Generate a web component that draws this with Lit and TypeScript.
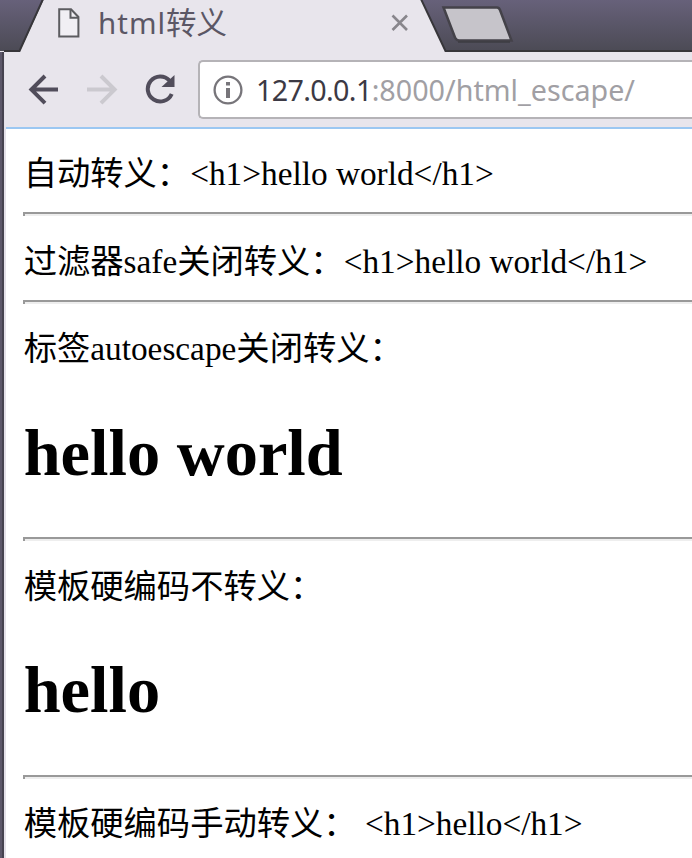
import { LitElement, html, css } from "lit";
import { customElement } from "lit/decorators.js";

@customElement("browser-tabs")
class BrowserTabs extends LitElement {
  static styles = css`
    :host {
      display: block;
      position: relative;
      height: 52px;
      overflow: hidden;
      background: linear-gradient(#67617a, #4b4a54);
    }
    .shape { position: absolute; inset: 0; display: block; }
    .tab {
      position: relative;
      display: flex;
      align-items: center;
      width: 351px;
      height: 46px;
      padding-left: 58px;
      font: 29.5px/42px "Noto Sans", "Noto Sans CJK SC", sans-serif;
      color: #5b5765;
    }
    .file { display: block; margin-right: 18px; }
    .label { flex: 1; height: 46px; white-space: nowrap; }
    .latin { letter-spacing: 1px; }
    .cjk { font-family: "Noto Sans CJK SC", sans-serif; font-size: 30.5px; }
    .close { display: block; }
  `;
  render() {
    return html`
      <svg class="shape" width="692" height="52" viewBox="0 0 692 52">
        <path d="M0 51H20L44.500 -2H420.500L445.500 51H692V52H0Z" fill="#e8e5ec" />
        <path d="M4 51H19.500L43.500 -2M420.500 -2L445.500 51H692" fill="none" stroke="#37363a" stroke-width="2" />
        <path d="M443.500 7.500H497Q499 7.500 500 10L511.500 40.500H459Q456.500 40.500 455 37.500Z" fill="#c6c4ca" stroke="#444249" stroke-width="2.500" />
        <path d="M458 42H510" stroke="#3d3c42" stroke-width="1.500" />
      </svg>
      <div class="tab">
        <svg class="file" width="22" height="30" viewBox="0 0 22 30">
          <path d="M1.200 1.200H13L20.400 9V28.500H1.200Z" fill="#f1eff4" stroke="#5c5c60" stroke-width="2" />
          <path d="M12.500 1.500V9.700H20.500" fill="none" stroke="#5c5c60" stroke-width="2" />
        </svg>
        <span class="label"><span class="latin">html</span><span class="cjk">转义</span></span>
        <svg class="close" width="18" height="18" viewBox="0 0 18 18">
          <path d="M1.500 1.500L16 16M16 1.500L1.500 16" fill="none" stroke="#88868c" stroke-width="2.600" />
        </svg>
      </div>
    `;
  }
}

@customElement("browser-toolbar")
class BrowserToolbar extends LitElement {
  static styles = css`
    :host {
      display: flex;
      box-sizing: border-box;
      height: 75px;
      padding: 8px 0 0 23px;
      background: #e8e5ec;
    }
    .icon { display: block; margin-top: 14px; }
    .back { margin-right: 27px; }
    .forward { margin-right: 26px; }
    .reload { margin-right: 21px; }
    .address {
      flex: 1;
      box-sizing: border-box;
      height: 59px;
      display: flex;
      align-items: center;
      padding-left: 13px;
      border: 2px solid #b5b3b7;
      border-right: 0;
      border-radius: 5px 0 0 5px;
      background: #fff;
      font: 28.7px/55px "Noto Sans", sans-serif;
      white-space: nowrap;
    }
    .info { display: block; margin-right: 13px; }
    .host { color: #3c3944; letter-spacing: -0.65px; }
    .rest { color: #a19fa4; }
  `;
  render() {
    return html`
      <svg class="icon back" width="32" height="32" viewBox="0 0 32 32">
        <path d="M30 15.600H4M17 2L3.400 15.600L17 29.200" fill="none" stroke="#514d5b" stroke-width="4" />
      </svg>
      <svg class="icon forward" width="32" height="32" viewBox="0 0 32 32">
        <path d="M0 15.600H27M14 2L27.600 15.600L14 29.200" fill="none" stroke="#cbc9cf" stroke-width="4" />
      </svg>
      <svg class="icon reload" width="32" height="32" viewBox="0 0 32 32">
        <path d="M24.500 6.500A12.500 12.500 0 1 0 26.700 20" fill="none" stroke="#514d5b" stroke-width="4" />
        <path d="M29.500 1V13H16.500Z" fill="#514d5b" />
      </svg>
      <div class="address">
        <svg class="info" width="30" height="30" viewBox="0 0 30 30">
          <circle cx="15" cy="15" r="13.400" fill="none" stroke="#77757a" stroke-width="2.300" />
          <path d="M15 7V10.500M15 13V23" fill="none" stroke="#77757a" stroke-width="4" />
        </svg>
        <span class="host">127.0.0.1</span><span class="rest">:8000/html_escape/</span>
      </div>
    `;
  }
}

@customElement("page-content")
class PageContent extends LitElement {
  static styles = css`
    :host {
      display: block;
      padding: 25px 0 0 17.7px;
      color: #000;
      background: #fff;
      font-family: "Liberation Serif", "Noto Sans CJK SC", serif;
      font-size: 33.3px;
      line-height: 40px;
      white-space: nowrap;
    }
    .line { height: 40px; }
    .title { height: 76px; margin: 46px 0; font-size: 66.4px; line-height: 76px; font-weight: 700; }
    .rule {
      box-sizing: border-box;
      height: 4px;
      margin: 18px 0 25px -0.7px;
      border: solid #999;
      border-width: 2px 0 0 2px;
      background: #eee;
    }
    .late { margin-bottom: 26px; }
    .after { margin-top: 0; }
    .upper { margin-top: 45px; margin-bottom: 47px; }
  `;
  render() {
    return html`
      <div class="line">自动转义：${"<h1>hello world</h1>"}</div>
      <div class="rule late"></div>
      <div class="line">过滤器safe关闭转义：${"<h1>hello world</h1>"}</div>
      <div class="rule"></div>
      <div class="line">标签autoescape关闭转义：</div>
      <div class="title">hello world</div>
      <div class="rule after late"></div>
      <div class="line">模板硬编码不转义：</div>
      <div class="title upper">hello</div>
      <div class="rule after"></div>
      <div class="line">模板硬编码手动转义： ${"<h1>hello</h1>"}</div>
    `;
  }
}

@customElement("app-root")
class AppRoot extends LitElement {
  static styles = css`
    :host { display: block; width: 692px; height: 858px; overflow: hidden; background: #fff; }
    .window { display: flex; height: 806px; }
    .edge {
      box-sizing: border-box;
      flex: none;
      width: 6px;
      background: linear-gradient(90deg, #5c5769 0 2px, #464350 2px 4px, #e4e1e9 4px 6px);
    }
    .body { flex: 1; min-width: 0; }
    .content { display: block; border-top: 2px solid #9bc7f2; }
    .bar { margin-left: -1px; }
  `;
  render() {
    return html`
      <browser-tabs></browser-tabs>
      <div class="window">
        <div class="edge"></div>
        <div class="body">
          <browser-toolbar class="bar"></browser-toolbar>
          <page-content class="content"></page-content>
        </div>
      </div>
    `;
  }
}
